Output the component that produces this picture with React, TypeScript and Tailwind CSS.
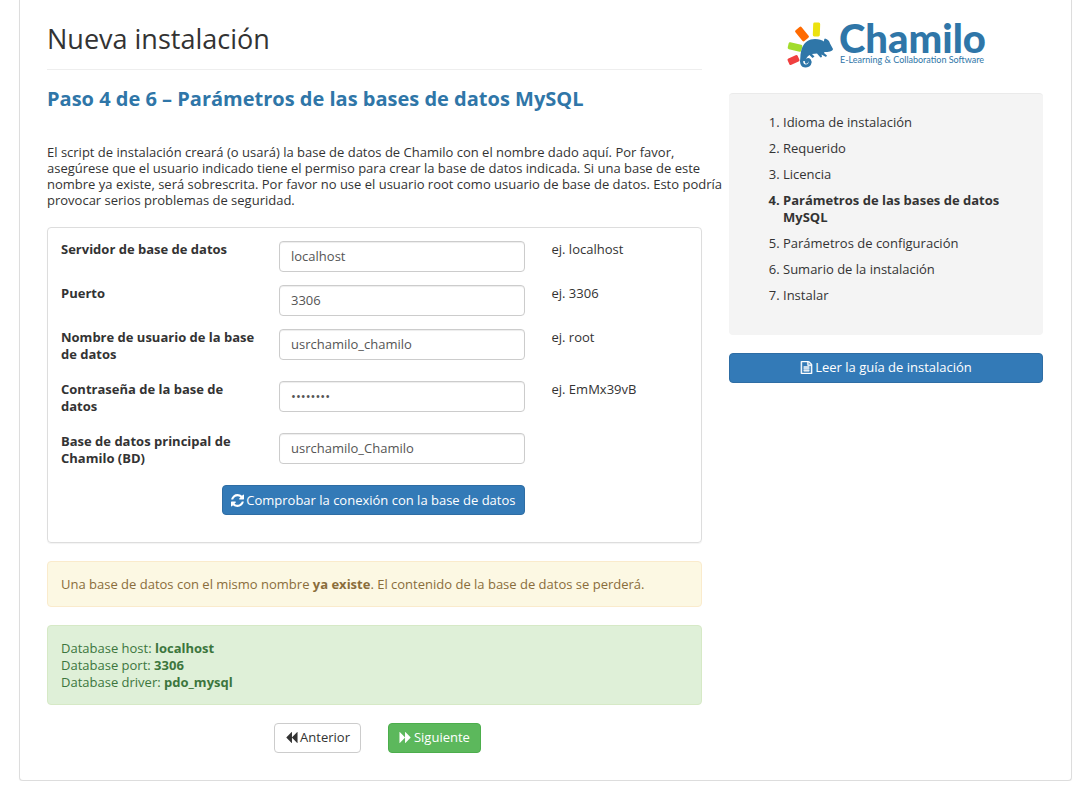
import { useState } from 'react'
import type { ReactNode } from 'react'

interface Field {
  id: string
  label: string
  value: string
  type?: string
  hint?: string
}

const FIELDS: Field[] = [
  { id: 'dbHost', label: 'Servidor de base de datos', value: 'localhost', hint: 'ej. localhost' },
  { id: 'dbPort', label: 'Puerto', value: '3306', hint: 'ej. 3306' },
  { id: 'dbUser', label: 'Nombre de usuario de la base de datos', value: 'usrchamilo_chamilo', hint: 'ej. root' },
  { id: 'dbPass', label: 'Contraseña de la base de datos', value: 'EmMx39vB', type: 'password', hint: 'ej. EmMx39vB' },
  { id: 'dbName', label: 'Base de datos principal de Chamilo (BD)', value: 'usrchamilo_Chamilo' },
]

const STEPS = [
  'Idioma de instalación',
  'Requerido',
  'Licencia',
  'Parámetros de las bases de datos MySQL',
  'Parámetros de configuración',
  'Sumario de la instalación',
  'Instalar',
]

const CURRENT_STEP = 3

function Icon({ box, children }: { box: string; children: ReactNode }) {
  return (
    <svg viewBox={box} className="h-[13px] w-[13px] shrink-0" fill="currentColor" aria-hidden="true">
      {children}
    </svg>
  )
}

const BACKWARD =
  'M1683 141q19-19 32-13t13 32v1472q0 26-13 32t-32-13l-710-710q-9-9-13-19v710q0 26-13 32t-32-13l-710-710q-19-19-19-45t19-45l710-710q19-19 32-13t13 32v710q4-10 13-19z'

function RefreshIcon() {
  return (
    <Icon box="0 0 1536 1536">
      <path d="M1511 928q0 5-1 7-64 268-268 434.5t-478 166.5q-146 0-282.5-55t-243.5-157l-129 129q-19 19-45 19t-45-19-19-45v-448q0-26 19-45t45-19h448q26 0 45 19t19 45-19 45l-137 137q71 66 161 102t187 36q134 0 250-65t186-179q11-17 53-117 8-23 30-23h192q13 0 22.5 9.5t9.5 22.5zm25-800v448q0 26-19 45t-45 19h-448q-26 0-45-19t-19-45 19-45l138-138q-148-137-349-137-134 0-250 65t-186 179q-11 17-53 117-8 23-30 23h-199q-13 0-22.5-9.5t-9.5-22.5v-7q65-268 270-434.5t480-166.5q146 0 284 55.5t245 156.5l130-129q19-19 45-19t45 19 19 45z" />
    </Icon>
  )
}

function FileIcon() {
  return (
    <Icon box="128 0 1536 1792">
      <path
        stroke="currentColor"
        strokeWidth="70"
        d="M1596 380q28 28 48 76t20 88v1152q0 40-28 68t-68 28h-1344q-40 0-68-28t-28-68v-1600q0-40 28-68t68-28h896q40 0 88 20t76 48zm-444-244v376h376q-10-29-22-41l-313-313q-12-12-41-22zm384 1528v-1024h-416q-40 0-68-28t-28-68v-416h-768v1536h1280zm-1024-864q0-14 9-23t23-9h704q14 0 23 9t9 23v64q0 14-9 23t-23 9h-704q-14 0-23-9t-9-23v-64zm736 224q14 0 23 9t9 23v64q0 14-9 23t-23 9h-704q-14 0-23-9t-9-23v-64q0-14 9-23t23-9h704zm0 256q14 0 23 9t9 23v64q0 14-9 23t-23 9h-704q-14 0-23-9t-9-23v-64q0-14 9-23t23-9h704z"
      />
    </Icon>
  )
}

function Logo() {
  return (
    <svg viewBox="0 0 200 48" className="h-12 w-[200px] overflow-visible" role="img" aria-label="Chamilo">
      <rect x="-3.5" y="-7" width="7" height="14" rx="1.5" fill="#ece20f" transform="translate(30.5 8.5) rotate(2)" />
      <rect x="-4" y="-7" width="8" height="14" rx="1.5" fill="#ff6a00" transform="translate(16 13) rotate(-39)" />
      <rect x="-3.5" y="-7" width="7" height="14" rx="1.5" fill="#a2dc2c" transform="translate(9 26) rotate(-77)" />
      <rect x="-3.5" y="-5.5" width="7" height="11" rx="1.5" fill="#f0403f" transform="translate(7.5 39) rotate(-115)" />
      <g fill="#2f76a8">
        <path d="M14.5 40C14 36 14.500 31 16 27C18.500 21 23 18 29 18C33 18 36 19 38 20.500C38 19 38 18 39 17.500C41.500 18 43.500 20 44 22.500L47 28C47 30.500 42 31 38.500 31L38 32L41 34.500L40 36L35.500 33.500L36 36L34.500 36.500L31 32.500L26 33L28.500 35.500L26.500 37L23.500 34C21 35.500 20 37.500 19.500 40Z" />
        <path d="M16.500 37C14.500 41 16 45 19.500 45C23.500 45 25 41.500 23.500 39.500C22 38 20 39 20.500 41" fill="none" stroke="#2f76a8" strokeWidth="3.2" strokeLinecap="round" />
        <text x="53" y="32" fontFamily="Lato, sans-serif" fontWeight="900" fontSize="40">Chamilo</text>
        <text x="54" y="42" fontFamily="Lato, sans-serif" fontSize="9">E-Learning &amp; Collaboration Software</text>
      </g>
    </svg>
  )
}

export default function App() {
  const [values, setValues] = useState<Record<string, string>>(
    Object.fromEntries(FIELDS.map(f => [f.id, f.value]))
  )

  return (
    <div className="ml-[19px] mr-[14px] rounded-b border border-t-0 border-[#ddd] bg-white pr-7 pb-[27px] pl-[27px] font-['Open_Sans',sans-serif] text-[13px] leading-[17px] text-[#333] shadow-[0_1px_1px_rgba(0,0,0,0.05)]">
      <div className="grid grid-cols-3 items-start gap-[27px]">
        <main className="col-span-2">
          <h1 className="border-b border-[#eee] pt-6 pb-4 text-[27px] leading-[29px]">Nueva instalación</h1>
          <h2 className="mt-[18px] text-xl leading-[22px] font-bold text-[#2f76a8]">
            Paso 4 de 6 – Parámetros de las bases de datos MySQL
          </h2>
          <p className="mt-[34px] -mr-5 leading-4">
            El script de instalación creará (o usará) la base de datos de Chamilo con el nombre dado aquí. Por favor,
            asegúrese que el usuario indicado tiene el permiso para crear la base de datos indicada. Si una base de este
            nombre ya existe, será sobrescrita. Por favor no use el usuario root como usuario de base de datos. Esto podría
            provocar serios problemas de seguridad.
          </p>

          <form
            onSubmit={e => e.preventDefault()}
            className="mt-[19px] rounded border border-[#ddd] px-[13px] pt-[13px] pb-[27px] shadow-[0_1px_1px_rgba(0,0,0,0.05)]"
          >
            {FIELDS.map(f => (
              <div key={f.id} className="mb-[13px] grid grid-cols-12 items-start gap-x-[27px]">
                <label htmlFor={f.id} className="col-span-4 -mr-2 pb-[5px] font-bold">{f.label}</label>
                <input
                  id={f.id}
                  type={f.type ?? 'text'}
                  value={values[f.id]}
                  onChange={e => setValues(prev => ({ ...prev, [f.id]: e.target.value }))}
                  className="col-span-5 h-[31px] w-full rounded border border-[#ccc] bg-white px-[11px] pb-0.5 text-[#555] shadow-[inset_0_1px_1px_rgba(0,0,0,0.075)]"
                />
                {f.hint && <span className="col-span-3">{f.hint}</span>}
              </div>
            ))}
            <div className="grid grid-cols-12 gap-x-[27px]">
              <div className="col-span-9 flex justify-end">
                <button type="submit" className="flex h-[30px] items-center gap-0.5 rounded border border-[#2e6da4] bg-[#337ab7] px-2 text-white">
                  <RefreshIcon />
                  Comprobar la conexión con la base de datos
                </button>
              </div>
            </div>
          </form>

          <div className="mt-[18px] rounded border border-[#faebcc] bg-[#fcf8e3] px-[13px] pt-[14px] pb-[13px] text-[#8a6d3b]">
            Una base de datos con el mismo nombre <strong>ya existe</strong>. El contenido de la base de datos se perderá.
          </div>

          <div className="mt-[18px] rounded border border-[#d6e9c6] bg-[#dff0d8] px-[13px] pt-[14px] pb-[13px] text-[#3c763d]">
            <p>Database host: <strong>localhost</strong></p>
            <p>Database port: <strong>3306</strong></p>
            <p>Database driver: <strong>pdo_mysql</strong></p>
          </div>

          <div className="mt-[18px] flex justify-center gap-[27px] pl-1.5">
            <button type="button" className="flex h-[30px] items-center gap-0.5 rounded border border-[#ccc] bg-white px-[10px] pb-0.5">
              <Icon box="0 0 1792 1792"><path d={BACKWARD} /></Icon>
              Anterior
            </button>
            <button type="button" className="flex h-[30px] items-center gap-0.5 rounded border border-[#4cae4c] bg-[#5cb85c] px-[10px] pb-0.5 text-white">
              <Icon box="0 0 1792 1792"><path d={BACKWARD} transform="translate(1792 0) scale(-1 1)" /></Icon>
              Siguiente
            </button>
          </div>
        </main>

        <aside>
          <div className="flex justify-center pt-[21px]">
            <Logo />
          </div>
          <ol className="mt-6 list-decimal rounded border-t border-[#eaeaea] bg-[#f4f4f4] pt-4 pr-[27px] pb-[26px] pl-[54px]">
            {STEPS.map((step, i) => (
              <li key={step} className={i === CURRENT_STEP ? 'pt-1 pb-[5px] font-bold' : 'pt-1 pb-[5px]'}>{step}</li>
            ))}
          </ol>
          <a href="#guia" className="mt-[18px] flex h-[30px] items-center justify-center gap-0.5 rounded border border-[#2e6da4] bg-[#337ab7] pb-0.5 text-white">
            <FileIcon />
            Leer la guía de instalación
          </a>
        </aside>
      </div>
    </div>
  )
}
